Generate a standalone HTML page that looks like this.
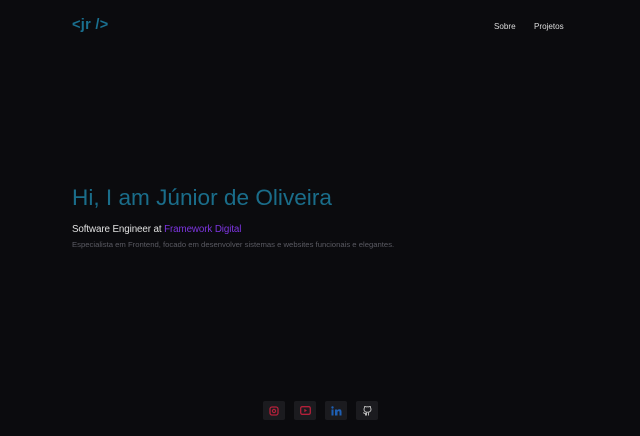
<!DOCTYPE html>
<html><head><meta charset="utf-8"><style>
*{margin:0;padding:0;box-sizing:border-box}
body{width:640px;height:436px;background:#0b0b0e;font-family:"Liberation Sans",sans-serif;position:relative;overflow:hidden}
.logo{position:absolute;left:72px;top:17px;color:#1a7090;font-weight:bold;font-size:14.5px;letter-spacing:0.3px}
.nav{position:absolute;top:22px;font-size:8.1px;color:#ddd}
h1{position:absolute;left:72px;top:185px;font-weight:normal;font-size:22.6px;color:#1a6d8a;white-space:nowrap}
.sub{position:absolute;left:72px;top:224px;font-size:9.8px;color:#e0e0e0;letter-spacing:-0.1px}
.sub span{color:#7d35e0}
.desc{position:absolute;left:72px;top:240px;font-size:7.7px;color:#5a5a62}
.b{position:absolute;top:401px;width:22px;height:19px;background:#1b1b1f;border-radius:2px;display:flex;align-items:center;justify-content:center}
</style></head><body>
<div class="logo">&lt;jr /&gt;</div>
<div class="nav" style="left:494px">Sobre</div>
<div class="nav" style="left:534px">Projetos</div>
<h1>Hi, I am Júnior de Oliveira</h1>
<div class="sub">Software Engineer at <span>Framework Digital</span></div>
<div class="desc">Especialista em Frontend, focado em desenvolver sistemas e websites funcionais e elegantes.</div>
<div class="b" style="left:263px"><svg width="10" height="10" viewBox="0 0 10 10"><rect x="1" y="1" width="8" height="8" rx="2" fill="none" stroke="#b3203a" stroke-width="1.3"/><circle cx="5" cy="5" r="1.6" fill="none" stroke="#b3203a" stroke-width="1.2"/></svg></div>
<div class="b" style="left:294px"><svg width="11" height="9" viewBox="0 0 11 9"><rect x="0.7" y="0.7" width="9.6" height="7.6" rx="1.5" fill="none" stroke="#b3203a" stroke-width="1.3"/><path d="M4.3 2.8L7 4.5 4.3 6.2Z" fill="#b3203a"/></svg></div>
<div class="b" style="left:325px"><svg width="11" height="10" viewBox="0 0 11 10"><rect x="0.5" y="3.5" width="2" height="6" fill="#1e5fb4"/><circle cx="1.5" cy="1.5" r="1.2" fill="#1e5fb4"/><path d="M4 3.5h2v1c.5-.8 1.3-1.2 2.3-1.2 1.6 0 2.2 1 2.2 2.7V9.5h-2V6.3c0-.8-.3-1.2-.9-1.2-.7 0-1.1.5-1.1 1.3v3.1H4Z" fill="#1e5fb4"/></svg></div>
<div class="b" style="left:356px"><svg width="10" height="10" viewBox="0 0 10 10"><path d="M3.5 9.5V7.5C2 7.8 1.6 6.8 1.3 6.4M6.5 9.5V7.3c0-.6-.2-.9-.5-1.1 1.7-.2 3-.9 3-3 0-.6-.2-1.1-.6-1.5.1-.5.1-1-.1-1.4 0 0-.6-.1-1.5.6-.8-.2-1.8-.2-2.6 0C3.3.2 2.7.3 2.7.3c-.2.4-.2.9-.1 1.4-.4.4-.6.9-.6 1.5 0 2.1 1.3 2.8 3 3-.3.2-.5.6-.5 1.1v2.2" fill="none" stroke="#b8b8b8" stroke-width="1"/></svg></div>
</body></html>
